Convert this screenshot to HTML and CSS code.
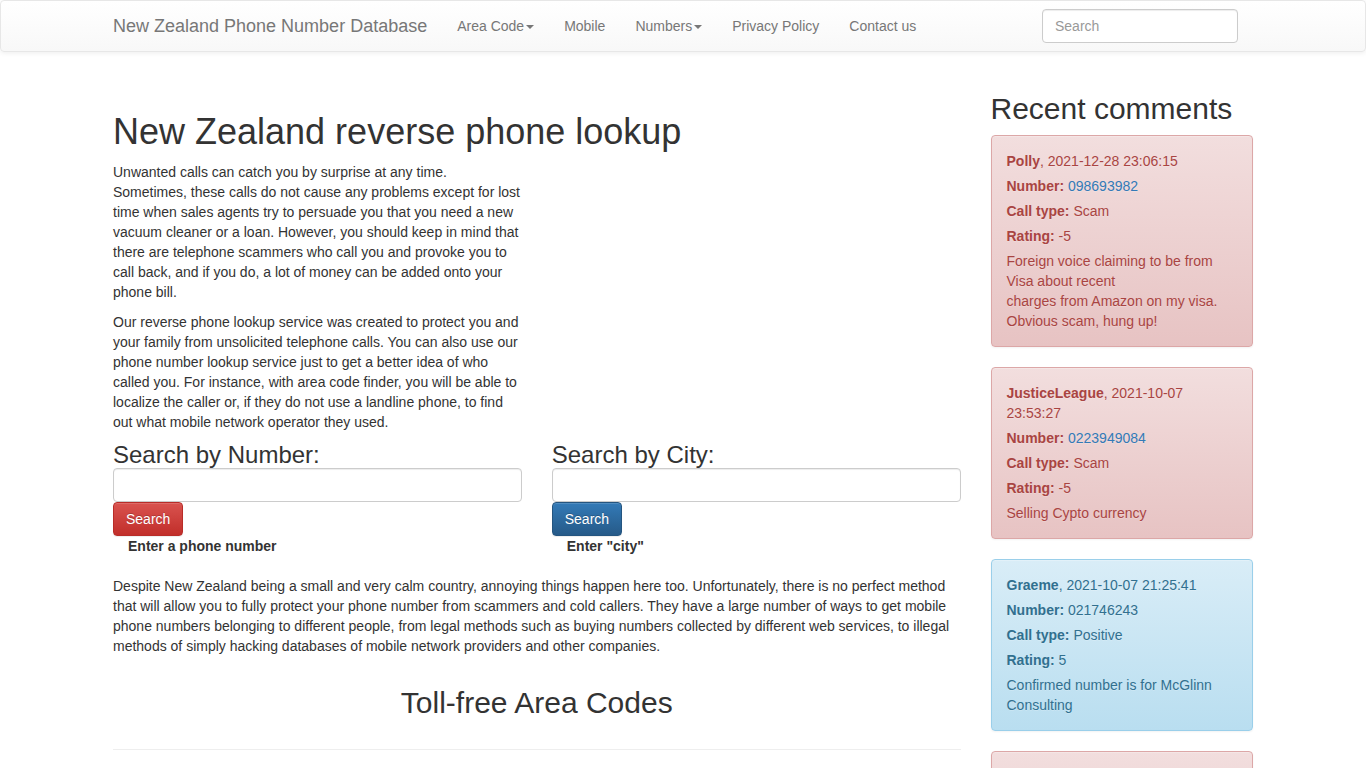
FILE: index.html
```html
<!DOCTYPE html>
<html lang="en">
<head>
    <meta charset="UTF-8">
    <meta name="viewport" content="width=device-width, initial-scale=1.0">
    <title>New Zealand reverse phone lookup</title>
    <link rel="stylesheet" href="styles.css">
</head>
<body>
    <nav class="navbar">
        <div class="container navbar-inner">
            <a class="brand" href="#">New Zealand Phone Number Database</a>
            <ul class="nav">
                <li><a href="#">Area Code<span class="caret"></span></a></li>
                <li><a href="#">Mobile</a></li>
                <li><a href="#">Numbers<span class="caret"></span></a></li>
                <li><a href="#">Privacy Policy</a></li>
                <li><a href="#">Contact us</a></li>
            </ul>
            <form class="navbar-form">
                <input type="text" class="form-control" placeholder="Search">
            </form>
        </div>
    </nav>

    <div class="container layout">
        <main class="main">
            <h1>New Zealand reverse phone lookup</h1>

            <div class="two-cols">
                <div>
                    <p>Unwanted calls can catch you by surprise at any time. Sometimes, these calls do not cause any problems except for lost time when sales agents try to persuade you that you need a new vacuum cleaner or a loan. However, you should keep in mind that there are telephone scammers who call you and provoke you to call back, and if you do, a lot of money can be added onto your phone bill.</p>
                    <p>Our reverse phone lookup service was created to protect you and your family from unsolicited telephone calls. You can also use our phone number lookup service just to get a better idea of who called you. For instance, with area code finder, you will be able to localize the caller or, if they do not use a landline phone, to find out what mobile network operator they used.</p>
                </div>
                <div></div>
            </div>

            <div class="two-cols search-row">
                <form class="search-box">
                    <label for="number">Search by Number:</label>
                    <input type="text" id="number" class="form-control">
                    <button type="button" class="btn btn-danger">Search</button>
                    <span class="hint">Enter a phone number</span>
                </form>
                <form class="search-box">
                    <label for="city">Search by City:</label>
                    <input type="text" id="city" class="form-control">
                    <button type="button" class="btn btn-primary">Search</button>
                    <span class="hint">Enter "city"</span>
                </form>
            </div>

            <div class="block">
                <p>Despite New Zealand being a small and very calm country, annoying things happen here too. Unfortunately, there is no perfect method that will allow you to fully protect your phone number from scammers and cold callers. They have a large number of ways to get mobile phone numbers belonging to different people, from legal methods such as buying numbers collected by different web services, to illegal methods of simply hacking databases of mobile network providers and other companies.</p>
            </div>

            <div class="block">
                <h2 class="center">Toll-free Area Codes</h2>
            </div>
            <hr>
        </main>

        <aside class="side">
            <h2>Recent comments</h2>

            <div class="alert alert-danger">
                <div class="line"><b>Polly</b>, 2021-12-28 23:06:15</div>
                <div class="line"><b>Number:</b> <a href="#">098693982</a></div>
                <div class="line"><b>Call type:</b> Scam</div>
                <div class="line"><b>Rating:</b> -5</div>
                <p>Foreign voice claiming to be from Visa about recent<br>charges from Amazon on my visa. Obvious scam, hung up!</p>
            </div>

            <div class="alert alert-danger">
                <div class="line"><b>JusticeLeague</b>, 2021-10-07 23:53:27</div>
                <div class="line"><b>Number:</b> <a href="#">0223949084</a></div>
                <div class="line"><b>Call type:</b> Scam</div>
                <div class="line"><b>Rating:</b> -5</div>
                <p>Selling Cypto currency</p>
            </div>

            <div class="alert alert-info">
                <div class="line"><b>Graeme</b>, 2021-10-07 21:25:41</div>
                <div class="line"><b>Number:</b> 021746243</div>
                <div class="line"><b>Call type:</b> Positive</div>
                <div class="line"><b>Rating:</b> 5</div>
                <p>Confirmed number is for McGlinn Consulting</p>
            </div>

            <div class="alert alert-danger">
                <div class="line"><b>Anonymous</b>, 2021-10-06 18:12:09</div>
                <div class="line"><b>Number:</b> <a href="#">095551234</a></div>
                <div class="line"><b>Call type:</b> Scam</div>
                <div class="line"><b>Rating:</b> -5</div>
                <p>Recorded message, hung up.</p>
            </div>
        </aside>
    </div>
</body>
</html>
```

FILE: styles.css
```css
* {
    box-sizing: border-box;
}
body {
    margin: 0;
    font-family: "Liberation Sans", Arial, Helvetica, sans-serif;
    font-size: 14px;
    line-height: 20px;
    color: #333;
    background: #fff;
}
a {
    color: #337ab7;
    text-decoration: none;
}
p {
    margin: 0 0 10px;
}
h1, h2 {
    font-weight: 500;
    line-height: 1.1;
    margin: 20px 0 10px;
}
h1 {
    font-size: 36px;
}
h2 {
    font-size: 30px;
}
.center {
    text-align: center;
}
hr {
    margin: 20px 0;
    border: 0;
    border-top: 1px solid #eee;
}
.container {
    width: 1170px;
    margin: 0 auto;
    padding: 0 15px;
}

/* top bar */
.navbar {
    background-image: linear-gradient(to bottom, #fff 0, #f8f8f8 100%);
    border: 1px solid #e7e7e7;
    border-radius: 4px;
    box-shadow: inset 0 1px 0 rgba(255, 255, 255, .15), 0 1px 5px rgba(0, 0, 0, .075);
    margin-bottom: 20px;
}
.navbar-inner {
    display: flex;
    align-items: flex-start;
    height: 50px;
}
.brand {
    font-size: 18px;
    line-height: 20px;
    padding: 15px 15px 15px 0;
    color: #777;
    text-shadow: 0 1px 0 rgba(255, 255, 255, .25);
}
.nav {
    display: flex;
    list-style: none;
    margin: 0;
    padding: 0;
}
.nav a {
    display: block;
    padding: 15px;
    color: #777;
    text-shadow: 0 1px 0 rgba(255, 255, 255, .25);
}
.caret {
    display: inline-block;
    width: 0;
    height: 0;
    margin-left: 2px;
    vertical-align: middle;
    border-top: 4px solid #777;
    border-left: 4px solid transparent;
    border-right: 4px solid transparent;
}
.navbar-form {
    margin: 8px 15px 0 auto;
}
.navbar-form .form-control {
    width: 196px;
}
.form-control {
    display: block;
    width: 100%;
    height: 34px;
    padding: 6px 12px;
    font: inherit;
    color: #555;
    background: #fff;
    border: 1px solid #ccc;
    border-radius: 4px;
    box-shadow: inset 0 1px 1px rgba(0, 0, 0, .075);
}
.form-control::placeholder {
    color: #999;
}

/* page columns */
.layout {
    display: grid;
    grid-template-columns: 1fr 262.5px;
    column-gap: 30px;
}
.main {
    padding-top: 20px;
}
.block {
    display: flow-root;
}
.two-cols {
    display: grid;
    grid-template-columns: 1fr 1fr;
    column-gap: 30px;
}
.search-row {
    margin-bottom: 20px;
}
.search-box label {
    display: block;
    font-size: 24px;
    line-height: 26px;
    margin: 0;
}
.btn {
    display: block;
    padding: 6px 12px;
    font: inherit;
    color: #fff;
    border: 1px solid transparent;
    border-radius: 4px;
    text-shadow: 0 -1px 0 rgba(0, 0, 0, .2);
    box-shadow: inset 0 1px 0 rgba(255, 255, 255, .15), 0 1px 1px rgba(0, 0, 0, .075);
    cursor: pointer;
}
.btn-danger {
    background-image: linear-gradient(to bottom, #d9534f 0, #c12e2a 100%);
    border-color: #b92c28;
}
.btn-primary {
    background-image: linear-gradient(to bottom, #337ab7 0, #265a88 100%);
    border-color: #245580;
}
.hint {
    display: block;
    font-weight: bold;
    padding-left: 15px;
}

/* comments */
.alert {
    padding: 15px;
    margin-bottom: 20px;
    border: 1px solid transparent;
    border-radius: 4px;
    text-shadow: 0 1px 0 rgba(255, 255, 255, .2);
    box-shadow: inset 0 1px 0 rgba(255, 255, 255, .25), 0 1px 2px rgba(0, 0, 0, .05);
}
.alert p {
    margin: 0;
}
.alert .line {
    margin-bottom: 5px;
}
.alert-danger {
    color: #a94442;
    background-image: linear-gradient(to bottom, #f2dede 0, #e7c3c3 100%);
    border-color: #dca7a7;
}
.alert-info {
    color: #31708f;
    background-image: linear-gradient(to bottom, #d9edf7 0, #b9def0 100%);
    border-color: #9acfea;
}
```
